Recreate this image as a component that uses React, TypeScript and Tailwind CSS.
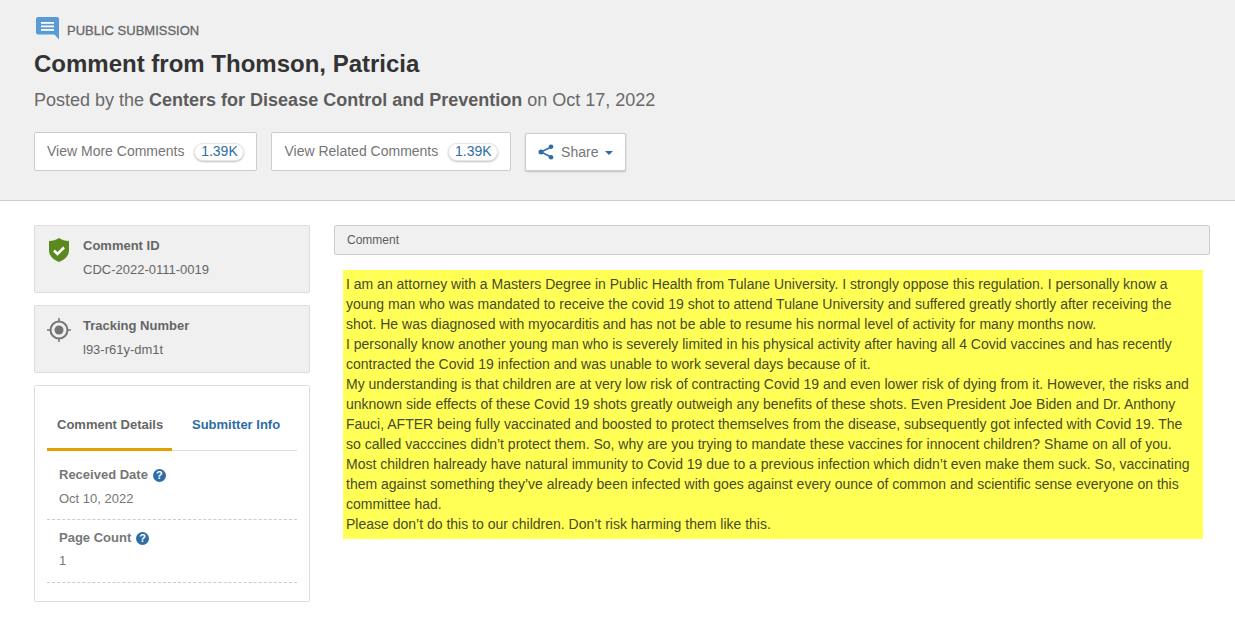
import React from "react"

function CommentIcon() {
  return (
    <svg width="23" height="23" viewBox="0 0 23 23">
      <path d="M2 0h19a2 2 0 0 1 2 2v20.500l-4.500-5H2a2 2 0 0 1-2-2V2a2 2 0 0 1 2-2z" fill="#5b9bd5" />
      <rect x="5" y="5" width="13" height="1.800" fill="#fff" />
      <rect x="5" y="8.500" width="13" height="1.800" fill="#fff" />
      <rect x="5" y="12" width="13" height="1.800" fill="#fff" />
    </svg>
  )
}

function ShareIcon() {
  return (
    <svg width="16" height="16" viewBox="0 0 16 16" fill="#2e6da4" stroke="#2e6da4">
      <path d="M13 3 3 8l10 5" fill="none" strokeWidth="1.500" />
      <circle cx="13" cy="2.800" r="2.300" stroke="none" />
      <circle cx="3" cy="8" r="2.500" stroke="none" />
      <circle cx="13" cy="13.200" r="2.300" stroke="none" />
    </svg>
  )
}

function ShieldIcon() {
  return (
    <svg width="20" height="24" viewBox="0 0 20 24">
      <path d="M10 0c3 2 6 3 10 3v9c0 6-4 9.500-10 12C4 21.500 0 18 0 12V3c4 0 7-1 10-3z" fill="#5a8a1e" />
      <path d="M5 12.500l3.500 3.500L15 9.500" fill="none" stroke="#fff" strokeWidth="2.500" />
    </svg>
  )
}

function TargetIcon() {
  return (
    <svg width="24" height="24" viewBox="0 0 24 24" fill="none" stroke="#757575">
      <circle cx="12" cy="12" r="8.500" strokeWidth="2" />
      <circle cx="12" cy="12" r="4.500" fill="#757575" stroke="none" />
      <path d="M12 0v4M12 20v4M0 12h4M20 12h4" strokeWidth="1.500" />
    </svg>
  )
}

function HelpIcon() {
  return (
    <span className="inline-flex w-[13px] h-[13px] ml-[5px] rounded-full bg-[#2e6da4] text-white text-[11px] leading-[13px] font-bold justify-center">
      ?
    </span>
  )
}

function CountButton({ label }: { label: string }) {
  return (
    <div className="h-[39px] flex items-center bg-white border border-[#ccc] rounded-[2px] pl-3 pr-[12px] text-[14px] text-[#757575]">
      <span>{label}</span>
      <span className="ml-[10px] h-[18px] w-[50px] flex items-center justify-center rounded-full bg-white border border-[#e6e6e6] shadow-[0_1px_2px_rgba(0,0,0,0.25)] text-[#2e6da4]">
        1.39K
      </span>
    </div>
  )
}

const lines = [
  "I am an attorney with a Masters Degree in Public Health from Tulane University. I strongly oppose this regulation. I personally know a young man who was mandated to receive the covid 19 shot to attend Tulane University and suffered greatly shortly after receiving the shot. He was diagnosed with myocarditis and has not be able to resume his normal level of activity for many months now.",
  "I personally know another young man who is severely limited in his physical activity after having all 4 Covid vaccines and has recently contracted the Covid 19 infection and was unable to work several days because of it.",
  "My understanding is that children are at very low risk of contracting Covid 19 and even lower risk of dying from it. However, the risks and unknown side effects of these Covid 19 shots greatly outweigh any benefits of these shots. Even President Joe Biden and Dr. Anthony Fauci, AFTER being fully vaccinated and boosted to protect themselves from the disease, subsequently got infected with Covid 19. The so called vacccines didn’t protect them. So, why are you trying to mandate these vaccines for innocent children? Shame on all of you.",
  "Most children halready have natural immunity to Covid 19 due to a previous infection which didn’t even make them suck. So, vaccinating them against something they’ve already been infected with goes against every ounce of common and scientific sense everyone on this committee had.",
  "Please don’t do this to our children. Don’t risk harming them like this.",
]

export default function App() {
  return (
    <div className="min-h-[634px] bg-white font-['Liberation_Sans',Arial,sans-serif] text-[#5c5c5c]">
      {/* header */}
      <div className="h-[201px] bg-[#f0f0f0] border-b border-[#ccc] px-[34px] pt-[17px]">
        <div className="flex items-start h-[24px]">
          <span className="ml-[2px]"><CommentIcon /></span>
          <span className="ml-[8px] mt-[6px] text-[13px] leading-[16px] font-normal text-[#666] [-webkit-text-stroke:0.3px_#666]">PUBLIC SUBMISSION</span>
        </div>
        <h1 className="mt-[8px] text-[24px] leading-[30px] font-bold text-[#333]">Comment from Thomson, Patricia</h1>
        <p className="mt-[9px] text-[18px] leading-[24px] text-[#696969]">
          Posted by the <strong className="font-bold text-[#5c5c5c]">Centers for Disease Control and Prevention</strong> on Oct 17, 2022
        </p>
        <div className="flex items-start mt-[20px]">
          <CountButton label="View More Comments" />
          <div className="ml-[14px]"><CountButton label="View Related Comments" /></div>
          <button className="ml-[14px] mt-[1px] h-[38px] w-[101px] flex items-center justify-center bg-white border border-[#ccc] rounded-[2px] shadow-[0_1px_2px_rgba(0,0,0,0.2)] text-[14px] text-[#757575]">
            <ShareIcon />
            <span className="ml-[7px]">Share</span>
            <span className="ml-[7px] mt-[2px] border-x-[4px] border-x-transparent border-t-[4px] border-t-[#2e6da4]" />
          </button>
        </div>
      </div>

      {/* body */}
      <div className="flex pl-[34px] pr-[25px] pt-[24px]">
        <div className="w-[276px] shrink-0">
          <div className="h-[68px] flex bg-[#f0f0f0] border border-[#ddd] rounded-[2px] pl-[14px] pt-[12px]">
            <span className="w-[20px]"><ShieldIcon /></span>
            <div className="ml-[14px]">
              <div className="text-[13px] leading-[16px] font-bold text-[#666]">Comment ID</div>
              <div className="mt-[8px] text-[13px] leading-[16px] text-[#666]">CDC-2022-0111-0019</div>
            </div>
          </div>
          <div className="mt-[12px] h-[68px] flex bg-[#f0f0f0] border border-[#ddd] rounded-[2px] pl-[12px] pt-[12px]">
            <span className="w-[24px]"><TargetIcon /></span>
            <div className="ml-[12px]">
              <div className="text-[13px] leading-[16px] font-bold text-[#666]">Tracking Number</div>
              <div className="mt-[8px] text-[13px] leading-[16px] text-[#666]">l93-r61y-dm1t</div>
            </div>
          </div>
          <div className="mt-[12px] h-[217px] bg-white border border-[#ddd] rounded-[2px] px-[12px] pt-[31px]">
            <div className="flex h-[34px] border-b border-[#ddd] text-[13px] leading-[16px] font-bold">
              <div className="w-[125px] h-[34px] border-b-[3px] border-[#e5a000] pl-[10px] text-[#666]">Comment Details</div>
              <div className="pl-[20px] text-[#2e6da4]">Submitter Info</div>
            </div>
            <div className="h-[69px] border-b border-dashed border-[#ccc] pl-[12px] pt-[16px]">
              <div className="flex items-center text-[13px] leading-[16px] font-bold text-[#777]">Received Date<HelpIcon /></div>
              <div className="mt-[8px] text-[13px] leading-[16px] text-[#777]">Oct 10, 2022</div>
            </div>
            <div className="h-[63px] border-b border-dashed border-[#ccc] pl-[12px] pt-[10px]">
              <div className="flex items-center text-[13px] leading-[16px] font-bold text-[#777]">Page Count<HelpIcon /></div>
              <div className="mt-[7px] text-[13px] leading-[16px] text-[#777]">1</div>
            </div>
          </div>
        </div>

        <div className="ml-[24px] w-[876px] shrink-0">
          <div className="h-[30px] flex items-center bg-[#f0f0f0] border border-[#ccc] rounded-[2px] pl-[12px] text-[12px] text-[#5c5c5c]">Comment</div>
          <div className="mt-[15px] ml-[9px] w-[860px] bg-[#ffff55] pt-[4px] pb-[5px] px-[3px] text-[14px] leading-[20px] text-[#4a4a2a]">
            {lines.map((line, i) => (
              <div key={i}>{line}</div>
            ))}
          </div>
        </div>
      </div>
    </div>
  )
}
